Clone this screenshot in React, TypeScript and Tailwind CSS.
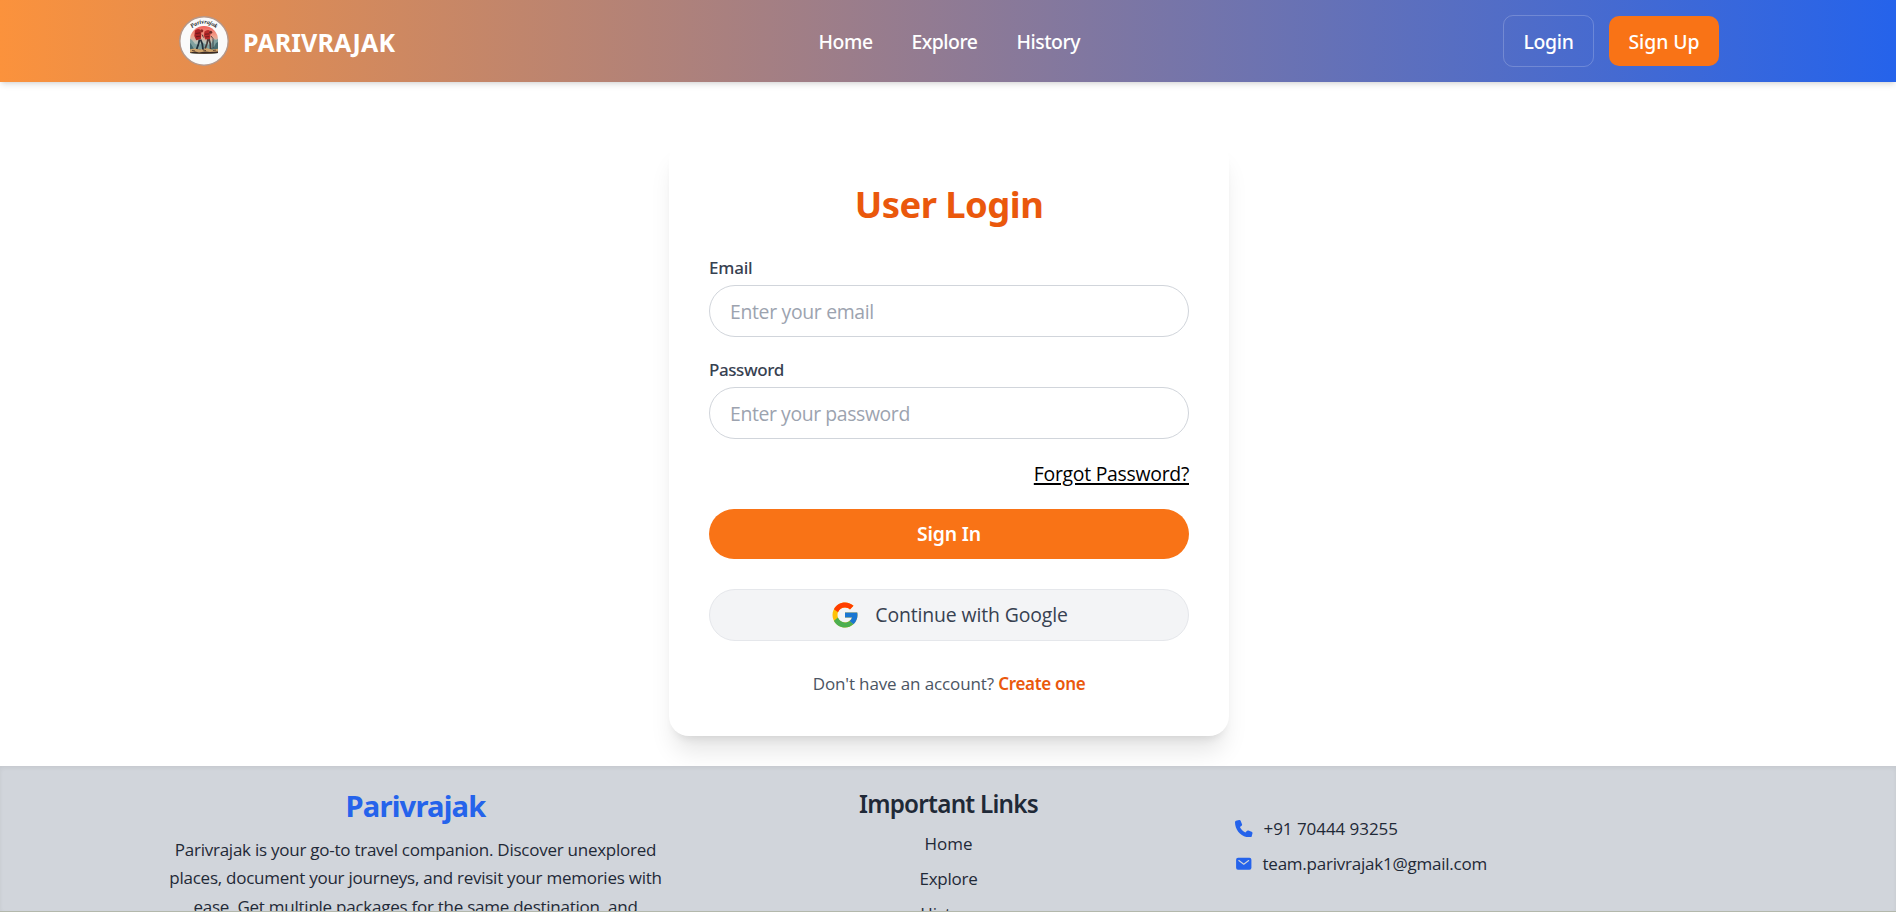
import React from "react";
import { FcGoogle } from "react-icons/fc";
import { FaPhone } from "react-icons/fa6";
import { IoMail } from "react-icons/io5";

const MEDIUM = "font-['Noto_Sans',sans-serif]";

function Logo() {
  return (
    <svg viewBox="0 0 50 50" className="size-[50px]" aria-hidden="true">
      <defs>
        <path id="arc" d="M8 17.5 Q25 -2.5 42 17.5" />
        <clipPath id="scene">
          <path d="M11 37V24a14 14 0 0 1 28 0v13q-14 1.5-28 0z" />
        </clipPath>
        <linearGradient id="sky" x1="0" y1="0" x2="0" y2="1">
          <stop offset="0" stopColor="#f0605a" />
          <stop offset="0.35" stopColor="#f2a08a" />
          <stop offset="0.55" stopColor="#b9c4bb" />
          <stop offset="1" stopColor="#6d9396" />
        </linearGradient>
      </defs>
      <circle cx="25" cy="25" r="24.2" fill="#fafafa" stroke="#b5988a" strokeWidth="1.4" />
      <text fontSize="6" fontWeight="700" fontFamily="'Liberation Serif', serif" fontStyle="italic" fill="#222" textAnchor="middle">
        <textPath href="#arc" startOffset="50%">Parivrajak</textPath>
      </text>
      <g clipPath="url(#scene)">
        <rect x="10" y="10" width="30" height="29" fill="url(#sky)" />
        <path d="M10 22l3 2 3 4 4 1 4-2 4 2 4-1 3-5 2 1 3-2v16H10z" fill="#7ea09f" />
        <path d="M10 26l2 2 3 5h4l6 1 6-1 4-2 2-4 2-1v13H10z" fill="#466b70" />
        <path d="M10 33.500l6-1 5 1 6-1.500 6 1.500 7-1v6H10z" fill="#d0a56c" />
        <path d="M11 36.500l5-1 4 1 6-1 5 .5 8-.5v4H11z" fill="#3a2b26" />
        <path d="M13 34.500l3 .4M24 34l3 .6M34 34.500l3-.4" stroke="#6b4a34" strokeWidth="1" />
      </g>
      <path d="M20.500 23.500l-1 4.500-1.800 5M21.500 23.500l1.800 4.500.7 5.500" stroke="#22303a" strokeWidth="1.800" fill="none" />
      <path d="M29 23l-1 4.500-1.800 5M30 23l1.200 4.500.4 5.500" stroke="#4a3a38" strokeWidth="1.700" fill="none" />
      <path d="M16 14.500q2.500-2.500 5-1l1.200 3.500-.3 6-4.700 1.200-1.900-4.200z" fill="#a81f24" />
      <path d="M16.500 17.500l4.600-.6M17 20.700l4.200-.5" stroke="#5b1419" strokeWidth="0.8" />
      <circle cx="22.700" cy="14.800" r="1.600" fill="#8b2622" />
      <path d="M25.500 15.500q2.300-2.200 5-1.200l1 3.600-.5 5-4.700.5-1.600-4z" fill="#b92a2a" />
      <path d="M26 18.200l4.200-.3M26.300 20.900l4-.2" stroke="#5b1419" strokeWidth="0.8" />
      <circle cx="31.700" cy="16.300" r="1.500" fill="#6a2a27" />
      <path d="M32 20l2 2.500v9.500M23 18.500l1.500 3" stroke="#2b2b30" strokeWidth="0.8" fill="none" />
    </svg>
  );
}

function Header() {
  return (
    <header className="h-[82px] shrink-0 bg-[linear-gradient(to_right,#fb923c,#2563eb)] pl-[2px] shadow-md">
      <div className={`mx-auto grid h-full w-[1540px] grid-cols-[1fr_auto_1fr] items-center text-white ${MEDIUM}`}>
        <div className="flex items-center gap-[14px]">
          <Logo />
          <span className="pt-[3px] text-[25px] leading-[35px] font-bold tracking-[0.1px]">PARIVRAJAK</span>
        </div>
        <nav className="flex gap-10 pt-px text-[19.4px] leading-[30px] font-medium">
          <a className="w-[53px] tracking-[-0.4px]">Home</a>
          <a className="w-[65px] tracking-[-0.5px]">Explore</a>
          <a className="w-[63px] tracking-[-0.5px]">History</a>
        </nav>
        <div className="flex items-center justify-end gap-[15px] text-[19.4px] leading-[30px] font-medium">
          <button className="h-[52px] w-[91px] rounded-[10px] border border-white/20 pt-px tracking-[-0.34px]">Login</button>
          <button className="h-[50px] w-[110px] rounded-[10px] bg-[#f97316] pt-px tracking-[-0.07px]">Sign Up</button>
        </div>
      </div>
    </header>
  );
}

function Field({ label, type, placeholder, labelClass, inputClass }: { label: string; type: string; placeholder: string; labelClass: string; inputClass: string }) {
  return (
    <label className="mb-5 block">
      <span className={`mb-[5px] block text-[17px] leading-[25px] font-medium text-[#374151] ${MEDIUM} ${labelClass}`}>{label}</span>
      <input
        type={type}
        placeholder={placeholder}
        className={`block h-[52px] w-full rounded-full border border-[#d1d5db] px-5 text-[19.4px] placeholder:text-[#9ca3af] ${inputClass}`}
      />
    </label>
  );
}

function LoginCard() {
  return (
    <section className="h-[596px] w-[560px] rounded-[20px] bg-white p-10 shadow-[0_20px_25px_-5px_rgb(0_0_0/0.1),0_8px_10px_-6px_rgb(0_0_0/0.1)]">
      <h2 className={`mb-[28px] pt-[2px] text-center text-[36.4px] leading-[45px] font-bold tracking-[-0.53px] text-[#ea580c] ${MEDIUM}`}>User Login</h2>
      <Field label="Email" type="email" placeholder="Enter your email" labelClass="tracking-[-0.2px]" inputClass="tracking-[-0.32px]" />
      <Field label="Password" type="password" placeholder="Enter your password" labelClass="tracking-[-0.42px]" inputClass="tracking-[-0.39px]" />
      <div className="mb-5 flex justify-end">
        <a className="text-[19.4px] leading-[30px] tracking-[-0.27px] text-black underline decoration-2 underline-offset-2">Forgot Password?</a>
      </div>
      <button className={`mb-[30px] block h-[50px] w-full rounded-full bg-[#f97316] text-[19.4px] leading-[30px] font-semibold tracking-[-0.2px] text-white ${MEDIUM}`}>Sign In</button>
      <button className="mb-[30px] flex h-[52px] w-full items-center justify-center gap-[15px] rounded-full border border-[#e5e7eb] bg-[#f3f4f6] text-[19.4px] leading-[30px] text-[#374151]">
        <FcGoogle className="size-[30px]" />
        <span className="tracking-[-0.12px]">Continue with Google</span>
      </button>
      <p className="text-center text-[17px] leading-[25px] tracking-[-0.13px] text-[#4b5563]">
        Don't have an account? <a className={`font-semibold tracking-[-0.32px] text-[#ea580c] ${MEDIUM}`}>Create one</a>
      </p>
    </section>
  );
}

function Footer() {
  return (
    <footer className="h-[146px] shrink-0 overflow-hidden border-b border-[#b3b8ac] bg-[#d1d5db] pt-5 text-[#1f2937] shadow-[inset_0_2px_4px_0_rgb(0_0_0/0.06)]">
      <div className="mx-auto grid w-[1560px] grid-cols-3 gap-10 pl-px text-[17px]">
        <div className="text-center">
          <h2 className={`mb-2.5 text-[29.1px] leading-10 font-bold tracking-[-0.78px] text-[#2563eb] ${MEDIUM}`}>Parivrajak</h2>
          <p className="leading-[28.44px] tracking-[-0.25px] whitespace-nowrap">
            Parivrajak is your go-to travel companion. Discover unexplored
            <br />
            places, document your journeys, and revisit your memories with
            <br />
            ease. Get multiple packages for the same destination, and
          </p>
        </div>
        <div className="text-center">
          <h3 className={`mb-2.5 text-[24.25px] leading-[35px] font-semibold tracking-[-0.75px] ${MEDIUM}`}>Important Links</h3>
          <ul className="space-y-2.5 leading-[25px]">
            <li>Home</li>
            <li className="tracking-[-0.25px]">Explore</li>
            <li>History</li>
          </ul>
        </div>
        <div className="flex flex-col gap-2.5 pt-[30px] leading-[25px]">
          <div className="flex items-center gap-[11px]">
            <FaPhone className="size-[17.5px] text-[#2563eb]" />
            <span className="tracking-[-0.05px]">+91 70444 93255</span>
          </div>
          <div className="flex items-center gap-2.5">
            <IoMail className="size-[17.5px] text-[#2563eb]" />
            <span className="tracking-[-0.23px]">team.parivrajak1@gmail.com</span>
          </div>
        </div>
      </div>
    </footer>
  );
}

export default function App() {
  return (
    <div className="flex h-[912px] flex-col overflow-hidden bg-white font-['Open_Sans','Noto_Sans',sans-serif]">
      <Header />
      <main className="flex h-[684px] shrink-0 justify-center pt-[58px] pl-[2px]">
        <LoginCard />
      </main>
      <Footer />
    </div>
  );
}
